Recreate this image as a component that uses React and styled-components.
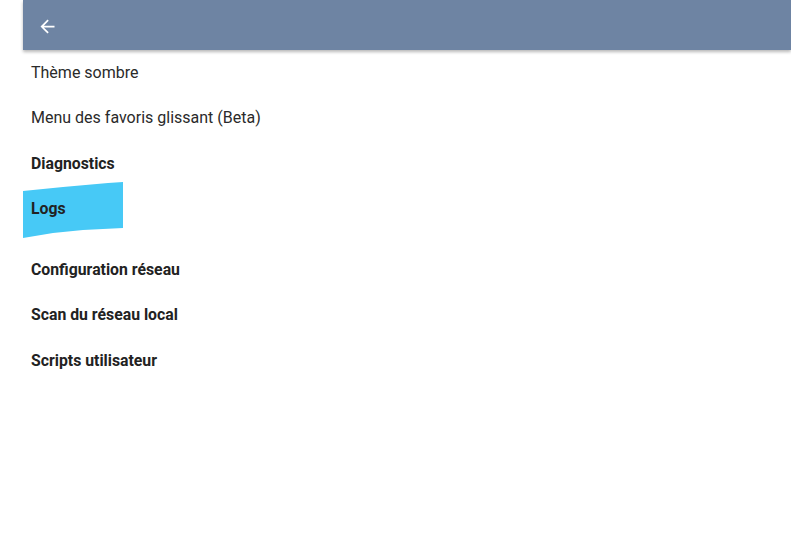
import React from "react";
import styled, { createGlobalStyle } from "styled-components";

const GlobalStyle = createGlobalStyle`
  html, body {
    margin: 0;
    padding: 0;
    background: #ffffff;
  }
  body {
    font-family: Roboto, "Noto Sans", "Liberation Sans", sans-serif;
    color: #212121;
  }
`;

export default function App() {
  const items = [
    { id: "theme", label: "Thème sombre" },
    { id: "menu", label: "Menu des favoris glissant (Beta)" },
    { id: "diag", label: "Diagnostics", bold: true },
    { id: "logs", label: "Logs", bold: true, marked: true },
    { id: "net", label: "Configuration réseau", bold: true, gapTop: true },
    { id: "scan", label: "Scan du réseau local", bold: true },
    { id: "scripts", label: "Scripts utilisateur", bold: true },
  ];
  return (
    <Page>
      <GlobalStyle />
      <Panel>
        <Header>
          <BackButton aria-label="Retour">
            <svg width="21" height="21" viewBox="0 0 24 24" fill="#ffffff">
              <path d="M20 11H7.83l5.59-5.59L12 4l-8 8 8 8 1.41-1.41L7.83 13H20v-2z" />
            </svg>
          </BackButton>
        </Header>
        <List>
          {items.map((it) => (
            <Item key={it.id} $bold={it.bold} $gapTop={it.gapTop}>
              {it.marked && (
                <Marker width="101" height="57" viewBox="0 0 101 57">
                  <polygon
                    points="0,9 40,5 85,1 100,0 100,46 60,48 30,51 0,56"
                    fill="#47c9f6"
                  />
                </Marker>
              )}
              <Label>{it.label}</Label>
            </Item>
          ))}
        </List>
      </Panel>
    </Page>
  );
}

const Page = styled.div`
  width: 791px;
  height: 547px;
  overflow: hidden;
  display: flex;
`;

const Panel = styled.div`
  margin-left: 23px;
  flex: 1;
  display: flex;
  flex-direction: column;
`;

const Header = styled.header`
  height: 50px;
  background-color: #6e84a3;
  box-shadow: 0 2px 3px rgba(0, 0, 0, 0.28);
  display: flex;
  align-items: center;
  padding-left: 14px;
  position: relative;
  z-index: 2;
`;

const BackButton = styled.button`
  background: none;
  border: none;
  padding: 0;
  width: 21px;
  height: 21px;
  margin-top: 2px;
  display: flex;
  align-items: center;
  justify-content: center;
  cursor: pointer;
`;

const List = styled.ul`
  list-style: none;
  margin: 0;
  padding: 0;
  display: flex;
  flex-direction: column;
`;

const Item = styled.li`
  position: relative;
  height: 45.5px;
  margin-top: ${(p) => (p.$gapTop ? "15px" : "0")};
  padding-left: 8px;
  display: flex;
  align-items: center;
  font-size: ${(p) => (p.$bold ? "15.8px" : "16px")};
  font-weight: ${(p) => (p.$bold ? 700 : 400)};
  color: ${(p) => (p.$bold ? "#222222" : "#2a2a2a")};
  &:first-child {
    margin-top: 0;
    height: 45px;
  }
`;

const Label = styled.span`
  position: relative;
  z-index: 1;
  padding-top: ${(p) => (p.$bold ? "1px" : "0")};
`;

const Marker = styled.svg`
  position: absolute;
  left: 0;
  top: -4px;
`;
